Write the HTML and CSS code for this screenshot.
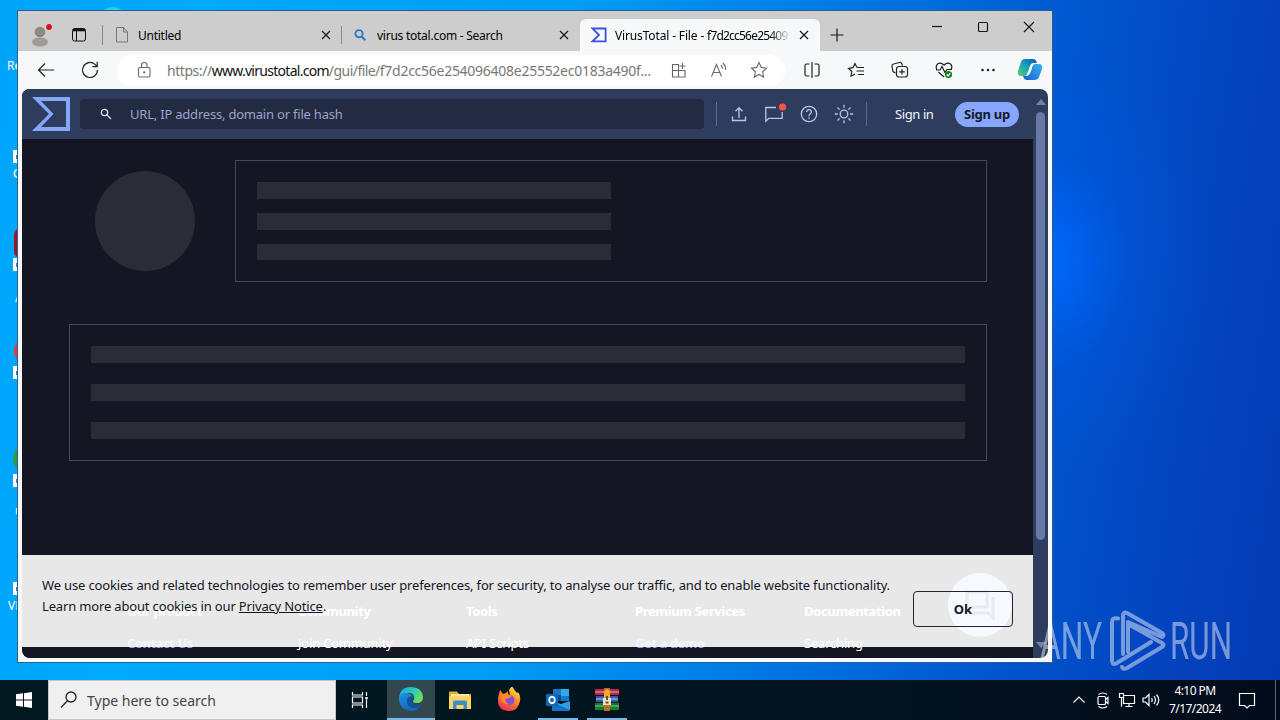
FILE: index.html
```html
<!DOCTYPE html>
<html lang="en">
<head>
  <meta charset="UTF-8">
  <meta name="viewport" content="width=device-width, initial-scale=1.0">
  <title>VirusTotal - File</title>
  <link rel="stylesheet" href="styles.css">
</head>
<body>
  <main class="desktop">
    <!-- DESKTOP SHORTCUTS -->
    <div class="glint"></div>
    <div class="shortcut recycle"><span>Re</span></div>
    <div class="shortcut s1"><i></i><b></b><span>C</span></div>
    <div class="shortcut s2"><i></i><b></b><span>A</span></div>
    <div class="shortcut s3"><i></i><b></b></div>
    <div class="shortcut s4"><i></i><b></b><span>u</span></div>
    <div class="shortcut s5"><b></b><span>VL</span></div>

    <!-- BROWSER WINDOW -->
    <section class="window">
      <header class="tabstrip">
        <div class="slot profile">
          <svg width="26" height="26" viewBox="0 0 26 26"><circle cx="13" cy="10" r="5.3" fill="#8d8985"/><ellipse cx="13" cy="20" rx="8" ry="4.5" fill="#a09b95"/><circle cx="22" cy="5" r="3.6" fill="#e3d5d5"/><circle cx="22" cy="5" r="2.9" fill="#d50f20"/></svg>
        </div>
        <div class="slot workspaces">
          <svg width="16" height="16" viewBox="0 0 16 16" fill="none" stroke="#111"><rect x="1.500" y="1.500" width="13" height="12.500" rx="2"/><path d="M2 3h12" stroke-width="2.600"/><path d="M5.500 4v10"/></svg>
        </div>
        <div class="tab">
          <svg class="tab-icon" width="14" height="18" viewBox="0 0 14 18" fill="none" stroke="#777"><path d="M1.5 1.5h7l4 4.5v10h-11zM8.5 1.5V6h4"/></svg>
          <span class="tab-title t1">Untitled</span>
          <svg class="x" width="10" height="10" viewBox="0 0 10 10"><path d="M1 1l8 8M9 1L1 9"/></svg>
        </div>
        <div class="tab second">
          <svg class="tab-icon" width="14" height="14" viewBox="0 0 14 14" fill="none" stroke="#2f7dca"><circle cx="6" cy="5.7" r="3.6" stroke-width="1.9"/><path d="M8.6 8.5l3.6 3.6" stroke-width="2.2"/></svg>
          <span class="tab-title t2">virus total.com - Search</span>
          <svg class="x" width="10" height="10" viewBox="0 0 10 10"><path d="M1 1l8 8M9 1L1 9"/></svg>
        </div>
        <div class="tab active">
          <svg class="tab-icon" width="18" height="16" viewBox="0 0 18 16" fill="none" stroke="#3d50e0" stroke-width="1.8"><path d="M2.4 1.5h13.2v12.8H2.4L9 8z"/></svg>
          <span class="tab-title t3">VirusTotal - File - <span class="hash">f7d2cc56e25409</span></span>
          <svg class="x" width="10" height="10" viewBox="0 0 10 10"><path d="M1 1l8 8M9 1L1 9"/></svg>
        </div>
        <svg class="plus" width="14" height="14" viewBox="0 0 14 14"><path d="M7 .5v13M.5 7h13"/></svg>
        <div class="controls">
          <svg viewBox="0 0 12 12"><path d="M1 5.500h10"/></svg>
          <svg viewBox="0 0 12 12"><rect x="1.5" y="1.5" width="9" height="9" rx="1.3"/></svg>
          <svg viewBox="0 0 12 12"><path d="M1 1l10 10M11 1L1 11"/></svg>
        </div>
      </header>

      <div class="toolbar">
        <svg class="nav back" viewBox="0 0 20 20"><path d="M18 10H2.5M9 3.5L2.5 10 9 16.5"/></svg>
        <svg class="nav reload" viewBox="0 0 20 20"><path d="M17.5 10A7.5 7.5 0 1 1 15 4.4L17 6.4M17.2 1.8v4.8h-4.8"/></svg>
        <div class="address">
          <svg class="lock" viewBox="0 0 16 18"><rect x="2.5" y="6.5" width="11.5" height="9.5" rx="1.5"/><path d="M5.5 6V4.300a2.700 2.700 0 0 1 5.500 0V6"/><circle cx="8.200" cy="11.300" r=".6" fill="#555"/></svg>
          <p class="url"><span class="scheme">https://</span><strong>www.virustotal.com</strong><span class="path">/gui/file/</span><span class="rest">f7d2cc56e254096408e25552ec0183a490f...</span></p>
          <svg class="addr-icon" viewBox="0 0 18 18"><path d="M2.500 3.500h6v12.500h-6zM2.500 9.500h12.500v6.500H8.500M12.500 2v6M9.500 5h6"/></svg>
          <svg class="addr-icon read" viewBox="0 0 18 18"><path d="M1.500 15.500L6.500 3.500l5 12M3.300 11.500h6.500M11 4q1.500 1.500 1.500 4M13 2q3 3 2.500 7"/></svg>
          <svg class="addr-icon" viewBox="0 0 18 18"><path d="M9 1.500l2.300 4.900 5.200.700-3.800 3.700.9 5.300L9 13.500l-4.600 2.600.9-5.300L1.500 7.100l5.200-.7z"/></svg>
        </div>
        <div class="actions">
          <svg viewBox="0 0 18 18"><path d="M6.500 3H3.500Q2 3 2 4.500v9Q2 15 3.500 15h3M11.500 3h3Q16 3 16 4.500v9q0 1.500-1.500 1.500h-3M9 1v16"/></svg>
          <svg viewBox="0 0 18 18"><path d="M10 6.500L8 2.500 6 6.600l-4.500.7 3.300 3.200-.8 4.700 4-2.200M10 6.500h7M9.500 10h7.500M11 13.500h6"/></svg>
          <svg viewBox="0 0 18 18"><path d="M4.500 12L2 10.500 1 5.500Q.8 3.500 2.500 3L8.500 1.500Q10.500 1.200 11 3l.5 1.500"/><rect x="5.500" y="5.500" width="11" height="10.500" rx="2.500"/><path d="M11 8v5.500M8.200 10.800h5.600"/></svg>
          <svg viewBox="0 0 18 18"><path d="M2 9Q0 5 2.800 2.800 6 1 9 4.200 12 1 15.200 2.800 18 5 16 8.500M3.500 11L9 16M1 9h4l2-3.500 3 6 2-3h5"/><circle cx="13.500" cy="13.500" r="3.600" fill="#148326" stroke="none"/><path d="M11.800 13.500l1.300 1.300 2.200-2.500" stroke="#fff"/></svg>
          <svg viewBox="0 0 18 18"><g fill="#222" stroke="none"><circle cx="3.500" cy="9" r="1.300"/><circle cx="9" cy="9" r="1.300"/><circle cx="14.500" cy="9" r="1.300"/></g></svg>
        </div>
        <svg class="copilot" width="26" height="24" viewBox="0 0 26 24">
          <defs>
            <linearGradient id="cpA" x1="0" y1="1" x2="1" y2="0"><stop offset="0" stop-color="#5ccb72"/><stop offset=".45" stop-color="#16a9b8"/><stop offset="1" stop-color="#0a55c5"/></linearGradient>
            <linearGradient id="cpB" x1="0" y1="1" x2="1" y2="0"><stop offset="0" stop-color="#155ed1"/><stop offset="1" stop-color="#35b8ee"/></linearGradient>
          </defs>
          <path d="M8 1h8q3 0 4 4h-4q-2 0-3 3l-2 7q-1 3-4 3H4q-4 0-3-5L4 4q1-3 4-3z" fill="url(#cpA)"/>
          <path d="M18 6h4q4 0 3 5l-3 8q-1 3-5 3h-7q-3 0-4-4h3q3 0 4-3l2-6q1-3 3-3z" fill="url(#cpB)"/>
          <path d="M16 6.500q-3 0-4 4.500-.500 3-2.500 5 4 0 5-4.500.500-3 1.500-5z" fill="#fff"/>
        </svg>
      </div>

      <div class="viewport">
        <div class="page">
          <nav class="vt-nav">
            <svg class="vt-logo" width="38" height="34" viewBox="0 0 38 34"><path d="M0 0h38v34H0l17-17zM9 4l12.500 13L9 30h25V4z" fill="#85a6fb" fill-rule="evenodd"/></svg>
            <div class="vt-search">
              <svg width="12" height="12" viewBox="0 0 12 12" fill="none" stroke="#d6dcf0" stroke-width="1.300"><circle cx="4.500" cy="4.500" r="3.200"/><path d="M7 7l4 4"/></svg>
              <span>URL, IP address, domain or file hash</span>
            </div>
            <i class="sep"></i>
            <div class="vt-icons">
              <svg viewBox="0 0 20 20"><path d="M10 14V4M6.500 7.200L10 3.700l3.500 3.500M3.500 12.500v4h13v-4"/></svg>
              <svg viewBox="0 0 20 20"><path d="M12 3.500H1.800v13.800l3-3h13.400V8"/><circle cx="18.500" cy="3" r="3.600" fill="#ff5145" stroke="none"/></svg>
              <svg viewBox="0 0 20 20"><circle cx="10" cy="10" r="7.700"/><path d="M7.600 8q.2-2.300 2.400-2.300T12.400 8q0 1-1.200 1.900T10 12.200M10 13.300v1.500"/></svg>
              <svg viewBox="0 0 20 20"><circle cx="10" cy="10" r="3.800"/><path d="M10 .8v3M10 16.200v3M.8 10h3M16.200 10h3M3.500 3.500l2.100 2.100M14.400 14.400l2.100 2.100M16.500 3.500l-2.100 2.100M5.600 14.400l-2.100 2.100"/></svg>
            </div>
            <i class="sep"></i>
            <a class="signin">Sign in</a>
            <a class="signup"><span>Sign up</span></a>
          </nav>

          <div class="summary">
            <div class="score"></div>
            <div class="card short"><i></i><i></i><i></i></div>
          </div>
          <div class="card long"><i></i><i></i><i></i></div>

          <footer class="vt-footer">
            <div><h4>Our product</h4><a class="hot">Contact Us</a></div>
            <div><h4>Community</h4><a>Join Community</a></div>
            <div><h4>Tools</h4><a>API Scripts</a></div>
            <div><h4>Premium Services</h4><a class="hot">Get a demo</a></div>
            <div><h4>Documentation</h4><a>Searching</a></div>
          </footer>

          <div class="chat">
            <svg width="32" height="32" viewBox="0 0 32 32" fill="none" stroke-width="3"><path d="M3 3h20v15H8l-5 5zM29 8v21l-5-5H9"/></svg>
          </div>
          <div class="cookies">
            <p><span class="line-a">We use cookies and related technologies to remember user preferences, for security, to analyse our traffic, and to enable website functionality.</span><br>
            <span class="line-b">Learn more about cookies in our <u>Privacy Notice</u>.</span></p>
            <button class="ok"><span>Ok</span></button>
          </div>
        </div>
        <div class="scrollbar"><i class="up"></i><i class="thumb"></i><i class="down"></i></div>
      </div>
    </section>

    <!-- WATERMARK -->
    <svg class="watermark" width="200" height="70" viewBox="0 0 200 70">
      <text x="4" y="54" textLength="62" lengthAdjust="spacingAndGlyphs">ANY</text>
      <path d="M82 13.500q-6-1.500-6 4v38q0 5 4 3L115 37M87 49V11q0-5 4-3l35 20q3 2 0 4L92 17M86 62q1 3 5 1l35-21q3-2 0-4L92 19v28" fill="none" stroke="#fff" stroke-width="4" stroke-linejoin="round" stroke-linecap="round"/>
      <text x="134" y="54" textLength="62" lengthAdjust="spacingAndGlyphs">RUN</text>
    </svg>
  </main>

  <!-- TASKBAR -->
  <footer class="taskbar">
    <div class="start"><svg width="16" height="16" viewBox="0 0 16 16" fill="#fff"><path d="M0 2.300L7 1.300v6.200H0zM8 1.200L16 0v7.500H8zM0 8.500h7v6.200l-7-1zM8 8.500h8V16l-8-1.200z"/></svg></div>
    <div class="search">
      <svg width="20" height="20" viewBox="0 0 20 20" fill="none" stroke="#222" stroke-width="1.300"><circle cx="12" cy="7" r="5"/><path d="M8.500 10.800L2 17.500"/></svg>
      <span>Type here to search</span>
    </div>
    <div class="apps">
      <div class="app view"><svg width="18" height="18" viewBox="0 0 18 18" fill="none" stroke="#fff" stroke-width="1.200"><path d="M1.500 1v3h10V1M1.500 17v-3h10v3M1.500 6h10v6h-10zM15.500 1v4M15.500 9v8"/><path d="M14.300 6h2.400v2.400h-2.400z" fill="#fff" stroke="none"/></svg></div>
      <div class="app current">
        <svg width="26" height="26" viewBox="0 0 26 26">
          <defs>
            <linearGradient id="edA" x1="0" y1="0" x2="1" y2=".4"><stop offset="0" stop-color="#22a6e8"/><stop offset=".6" stop-color="#2cc8bb"/><stop offset="1" stop-color="#68dc64"/></linearGradient>
            <linearGradient id="edB" x1="0" y1="0" x2=".6" y2="1"><stop offset="0" stop-color="#1b93e0"/><stop offset="1" stop-color="#1464b8"/></linearGradient>
          </defs>
          <path d="M1 12Q2 1 13 1q11 0 12 10 0 6-6 6-4 0-4-2 2-2 1-5Q14 6 9 7 3 8 1 13z" fill="url(#edA)"/>
          <path d="M1 12Q3 6 9 7q4 .5 6 4-6-1-6 4 0 7 8 7 3 0 6-3-3 6-10 6Q1 24 1 12z" fill="url(#edB)"/>
          <path d="M9 15q0-4 4-4.500 2 0 2.500 1-1.500 1-1.500 3.500 1 4 6 4l3-.5q-2 4-7 3-7-1-7-6.500z" fill="#115299"/>
        </svg>
      </div>
      <div class="app">
        <svg width="24" height="22" viewBox="0 0 24 22"><path d="M1 2.500h8l2 2.500h12v15H1z" fill="#e9a93c"/><path d="M3 5h18v4H3z" fill="#f7e6a4"/><path d="M1 7h22v13H1z" fill="#fbd55f"/><path d="M5 20v-7q0-1.500 1.500-1.500h11Q19 11.500 19 13v7h-3.500v-4h-7v4z" fill="#3b8ec9"/></svg>
      </div>
      <div class="app">
        <svg width="26" height="26" viewBox="0 0 26 26">
          <defs><linearGradient id="ffA" x1=".8" y1="0" x2=".3" y2="1"><stop offset="0" stop-color="#fff047"/><stop offset=".4" stop-color="#ff9a22"/><stop offset="1" stop-color="#f32b55"/></linearGradient></defs>
          <path d="M3 7l1-4 3 4 3-1 2-2v3l2 1-1-5 3-4q2 4 5 7l1-1q3 4 2 9-2 10-11 10Q2 24 2 13q0-4 1-6z" fill="url(#ffA)"/>
          <circle cx="13.500" cy="13" r="5" fill="#8550cf"/><path d="M6 8q4-2 7 0l3 1-3 2-4 1q0 4 4 5-6 1-8-5z" fill="#ff8a26"/>
        </svg>
      </div>
      <div class="app open">
        <svg width="26" height="24" viewBox="0 0 26 24"><path d="M8 1h16v12H8z" fill="#1378ca"/><path d="M16 1h8v7h-8z" fill="#32a9e7"/><path d="M8 7h8v6H8z" fill="#0a4b93"/><path d="M7 13l9 3 9-3v8q0 2-2 2H9q-2 0-2-2z" fill="#2b9fe2"/><path d="M7 14l18 8-2 1H7z" fill="#1473c6"/><rect x="1" y="6" width="12" height="12" rx="1" fill="#0b68bd"/><ellipse cx="7" cy="12" rx="2.800" ry="3.200" fill="none" stroke="#fff" stroke-width="1.700"/></svg>
      </div>
      <div class="app open">
        <svg width="26" height="24" viewBox="0 0 26 24"><path d="M1 1h24v6H1z" fill="#b3284a"/><path d="M1 3h24v2H1z" fill="#d9657c"/><path d="M2 8h22v6H2z" fill="#3459a5"/><path d="M2 10h22v2H2z" fill="#6f93d2"/><path d="M1 15h24v7H1z" fill="#187a35"/><path d="M1 17h24v2H1z" fill="#4ba356"/><path d="M10 0h6v23h-6z" fill="#b87124"/><path d="M10 3l3-2 3 2v7h-6z" fill="#f0aa32"/><path d="M9 10h8v7H9z" fill="#eee0ca"/><path d="M12 8h2v4h-2zM11.500 13.500h3v2h-3z" fill="#714c20"/></svg>
      </div>
    </div>
    <div class="tray">
      <svg viewBox="0 0 20 20"><path d="M4.500 12.500L10 7l5.500 5.500"/></svg>
      <svg viewBox="0 0 20 20"><rect x="5" y="6.500" width="7.500" height="8" rx="1"/><path d="M12.500 9.500l2.500-2v6l-2.500-2M5.500 4.500q4.500-3 8.500 0M5.500 16.500q4.500 3 8.500 0"/></svg>
      <svg viewBox="0 0 20 20"><path d="M7 5.500h10.500v8H6.500V8M12 13.500v3M8.500 16.500h7M2.500 3.500h4v4h-4zM4.500 7.500v9"/></svg>
      <svg viewBox="0 0 20 20"><path d="M2 8h2.500L8 4.500v11L4.500 12H2zM10.500 8q1.500 2 0 4M13 6q3 4 0 8M15.500 4.500q4.500 5.500 0 11"/></svg>
      <div class="clock"><span class="time">4:10 PM</span><span class="date">7/17/2024</span></div>
      <svg class="notes" viewBox="0 0 20 20"><path d="M2.500 3.500h15v12h-5L10 18l-2.500-2.500h-5z"/></svg>
      <i class="peek"></i>
    </div>
  </footer>
</body>
</html>
```
FILE: styles.css
```css
:root {
  --vt-bg: #151623;
  --vt-bar: #2e3d5e;
  --vt-field: #232b43;
  --vt-blue: #87a6fd;
  --skeleton: #2a2c36;
  --skeleton-border: #454660;
}

* {
  box-sizing: border-box;
}

body {
  width: 1280px;
  height: 720px;
  margin: 0;
  display: flex;
  flex-direction: column;
  overflow: hidden;
  font-family: "Noto Sans", "Open Sans", sans-serif;
  font-size: 12px;
}

svg {
  display: block;
  flex: none;
}

.desktop {
  position: relative;
  height: 680px;
  overflow: hidden;
  background:
    radial-gradient(ellipse 170px 220px at 1045px 262px, rgba(0, 104, 255, 0.95), rgba(0, 88, 225, 0.35) 50%, transparent),
    linear-gradient(98deg, #00a5fa 0%, #00aaff 15%, #009df4 42%, #0078e5 62%, #0054cd 80%, #0444be 91%, #033ab3 100%);
}

/* desktop shortcuts, mostly hidden behind the window */
.glint {
  position: absolute;
  left: 100px;
  top: 7px;
  width: 26px;
  height: 20px;
  border-radius: 50%;
  background: #22d0df;
}

.shortcut {
  position: absolute;
  left: 13px;
  width: 34px;
  color: #fff;
  font-size: 12px;
  line-height: 14px;
}

.shortcut b {
  display: block;
  width: 12px;
  height: 13px;
  background: linear-gradient(#3c7fb4, #3c7fb4) 3px 5px / 2px 4px no-repeat #fff;
}

.shortcut i {
  display: block;
  margin-left: 1px;
  height: 30px;
}

.recycle { left: 7px; top: 59px; }
.s1 { top: 120px; }
.s1 span { display: block; margin-top: 4px; }
.s2 { top: 228px; }
.s2 i { background: #9d1620; border-radius: 7px; }
.s2 span { display: block; margin: 20px 0 0 2px; }
.s3 { top: 336px; }
.s3 i { background: #e43c43; border-radius: 50%; }
.s4 { top: 444px; }
.s4 i { margin-left: 0; background: #2e9d42; border-radius: 50%; }
.s4 span { display: block; margin: 17px 0 0 2px; }
.s5 { left: 8px; top: 582px; }
.s5 b { margin-left: 5px; }
.s5 span { display: block; margin-top: 4px; }

/* window */
.window {
  position: absolute;
  left: 17px;
  top: 10px;
  width: 1036px;
  height: 653px;
  border: 1px solid #285f8c;
  background: #f7f8fa;
}

.tabstrip {
  display: flex;
  align-items: center;
  height: 40px;
  padding-top: 8px;
  background: #cdcdcd;
}

.slot {
  display: flex;
  justify-content: center;
  width: 38px;
}

.profile { margin-left: 3px; }

.workspaces {
  width: 44px;
  border-right: 1px solid #888;
  padding: 2px 4px 2px 0;
}

.tab {
  display: flex;
  align-items: center;
  width: 239px;
  height: 32px;
  padding: 0 11px 0 10px;
}

.tab:not(.active)::after {
  content: "";
  width: 1px;
  height: 18px;
  margin: 0 -11px 0 10px;
  background: #888;
}

.tab.second {
  width: 238px;
  padding-left: 11px;
}

.tab.second::after {
  visibility: hidden;
}

.tab-icon {
  width: 18px;
  margin-right: 7px;
}

.tab-title {
  flex: 1;
  overflow: hidden;
  white-space: nowrap;
  margin-right: 8px;
  letter-spacing: -0.25px;
}

.tab.second .tab-icon {
  width: 14px;
  margin-right: 10px;
}

.tab.active {
  width: 240px;
  background: #f7f8fa;
  border-radius: 6px 6px 0 0;
}

.active .tab-title {
  letter-spacing: -0.15px;
  mask-image: linear-gradient(90deg, #000 88%, transparent);
}

.hash { letter-spacing: -0.8px; }

.x, .plus, .controls svg {
  fill: none;
  stroke: #181818;
  stroke-width: 1.200;
}

.plus { margin-left: 10px; }

.controls {
  display: flex;
  gap: 34px;
  margin: -17px 17px 0 auto;
}

.controls svg {
  width: 12px;
  height: 12px;
}

.toolbar {
  display: flex;
  align-items: center;
  height: 38px;
  padding-left: 18px;
}

.nav {
  width: 20px;
  height: 20px;
  fill: none;
  stroke: #222;
  stroke-width: 1.200;
}

.reload { margin-left: 24px; }

.address {
  display: flex;
  align-items: center;
  width: 668px;
  height: 31px;
  margin-left: 17px;
  padding-left: 19px;
  border-radius: 16px;
  background: #fff;
}

.lock, .addr-icon {
  fill: none;
  stroke: #696969;
  stroke-width: 1.100;
}

.lock {
  width: 16px;
  height: 18px;
}

.url {
  width: 487px;
  margin: 0 0 0 15px;
  white-space: nowrap;
  font-size: 14px;
  color: #777;
}

.url strong {
  color: #111;
  font-weight: 400;
  letter-spacing: -0.72px;
}

.scheme { letter-spacing: -0.45px; }
.path { letter-spacing: -0.55px; }
.rest { letter-spacing: -0.27px; }

.addr-icon {
  width: 18px;
  height: 18px;
  margin-left: 16px;
}

.addr-icon + .addr-icon { margin-left: 22px; }

.actions {
  display: flex;
  gap: 26px;
  margin-left: 18px;
}

.actions svg {
  width: 18px;
  height: 18px;
  fill: none;
  stroke: #222;
  stroke-width: 1.200;
}

.copilot { margin-left: 20px; }

.viewport {
  display: flex;
  width: 1026px;
  height: 569px;
  margin-left: 4px;
  overflow: hidden;
  border-radius: 8px;
  background: var(--vt-bar);
}

.page {
  position: relative;
  width: 1011px;
  height: 569px;
  overflow: hidden;
  background: var(--vt-bg);
}

.scrollbar {
  display: flex;
  flex-direction: column;
  align-items: center;
  width: 15px;
  padding: 10px 0;
}

.up, .down {
  border: 5px solid transparent;
  border-top: 0;
  border-bottom: 6px solid #7482a5;
}

.down {
  margin-top: auto;
  transform: rotate(180deg);
}

.thumb {
  width: 9px;
  height: 428px;
  margin-top: 7px;
  border-radius: 5px;
  background: #6779a9;
}

/* VirusTotal page */
.vt-nav {
  display: flex;
  align-items: center;
  height: 50px;
  padding-left: 10px;
  background: var(--vt-bar);
}

.vt-search {
  display: flex;
  align-items: center;
  gap: 18px;
  width: 624px;
  height: 30px;
  margin: 0 12px 0 10px;
  padding-left: 20px;
  border-radius: 4px;
  background: var(--vt-field);
  color: #99a5c7;
  font-size: 13px;
  letter-spacing: -0.21px;
}

.sep {
  width: 1px;
  height: 24px;
  background: #596a91;
}

.vt-icons {
  display: flex;
  gap: 15px;
  margin: 0 12px 0 12px;
}

.vt-icons svg {
  width: 20px;
  height: 20px;
  overflow: visible;
  fill: none;
  stroke: #b9c6e6;
  stroke-width: 1.300;
}

.signin {
  width: 40px;
  margin-left: 28px;
  color: #f2f5ff;
  font-size: 13px;
  letter-spacing: -0.4px;
  white-space: nowrap;
}

.signup {
  display: flex;
  align-items: center;
  justify-content: center;
  width: 64px;
  height: 25px;
  margin-left: 20px;
  border-radius: 13px;
  background: var(--vt-blue);
  color: #141a2b;
  font-size: 13px;
  font-weight: 700;
  letter-spacing: -0.25px;
  white-space: nowrap;
}

.summary {
  display: flex;
  gap: 40px;
  padding: 21px 0 42px 73px;
}

.score {
  width: 100px;
  height: 100px;
  margin-top: 11px;
  border-radius: 50%;
  background: var(--skeleton);
}

.card {
  display: flex;
  flex-direction: column;
  border: 1px solid var(--skeleton-border);
  padding: 21px;
}

.card i {
  flex: none;
  height: 17px;
  background: var(--skeleton);
}

.short {
  width: 752px;
  height: 122px;
  gap: 14px;
}

.short i { width: 354px; }
.short i:last-child { height: 16px; }

.long {
  width: 918px;
  height: 137px;
  margin-left: 47px;
  gap: 21px;
}

.vt-footer {
  display: grid;
  grid-template-columns: 171px 168px 169px 169px 150px;
  padding: 141px 0 0 105px;
  color: #fff;
  font-size: 13px;
  line-height: 18px;
  letter-spacing: -0.2px;
  white-space: nowrap;
}

.vt-footer h4 {
  margin: 0 0 14px;
  font-size: 13px;
  letter-spacing: -0.35px;
}

.vt-footer .hot {
  color: var(--vt-blue);
  font-weight: 700;
  letter-spacing: -0.45px;
}

.chat {
  position: absolute;
  left: 926px;
  top: 484px;
  display: flex;
  align-items: center;
  justify-content: center;
  width: 64px;
  height: 64px;
  border-radius: 50%;
  background: #a5bdff;
}

.chat svg { stroke: #262e4a; }

.cookies {
  position: absolute;
  left: 0;
  top: 466px;
  display: flex;
  justify-content: space-between;
  align-items: center;
  width: 1011px;
  height: 92px;
  padding: 0 20px;
  background: rgba(255, 255, 255, 0.9);
  color: #15171f;
  font-size: 13px;
  line-height: 21px;
}

.cookies p {
  margin: 0 0 10px;
  white-space: nowrap;
}

.line-a { letter-spacing: -0.155px; }
.line-b { letter-spacing: -0.16px; }

.ok {
  width: 100px;
  height: 36px;
  margin-top: 16px;
  border: 1px solid #23252f;
  border-radius: 4px;
  background: none;
  color: #15171f;
  font: 700 13px "Noto Sans", sans-serif;
}

.watermark {
  position: absolute;
  left: 1036px;
  top: 605px;
  opacity: 0.46;
  fill: #fff;
  font-family: Roboto, sans-serif;
  font-size: 52px;
}

/* taskbar */
.taskbar {
  display: flex;
  height: 40px;
  background: linear-gradient(90deg, #021921, #02141f 60%, #020b1b);
  color: #fff;
}

.start, .app {
  display: flex;
  align-items: center;
  justify-content: center;
  width: 48px;
  height: 40px;
}

.search {
  display: flex;
  align-items: center;
  gap: 8px;
  width: 288px;
  padding-left: 10px;
  border: 1px solid #c5c8ca;
  background: #f0f0f0;
  color: #444;
  font-size: 14px;
}

.apps {
  display: flex;
  gap: 1px;
}

.view { margin-right: 2px; }

.current {
  background: #31484f;
  border-bottom: 2px solid #76b9ed;
}

.open {
  background: linear-gradient(#76b9ed, #76b9ed) 4px 38px / 40px 2px no-repeat;
}

.tray {
  display: flex;
  align-items: center;
  margin-left: auto;
  gap: 4px;
}

.tray svg {
  width: 20px;
  height: 20px;
  fill: none;
  stroke: #fff;
  stroke-width: 1.200;
}

.clock {
  display: flex;
  flex-direction: column;
  align-items: center;
  width: 60px;
  line-height: 18px;
  letter-spacing: -0.55px;
  margin-right: 8px;
}

.peek {
  height: 40px;
  margin-left: 14px;
  border-left: 1px solid #5c6570;
  width: 5px;
}
```
